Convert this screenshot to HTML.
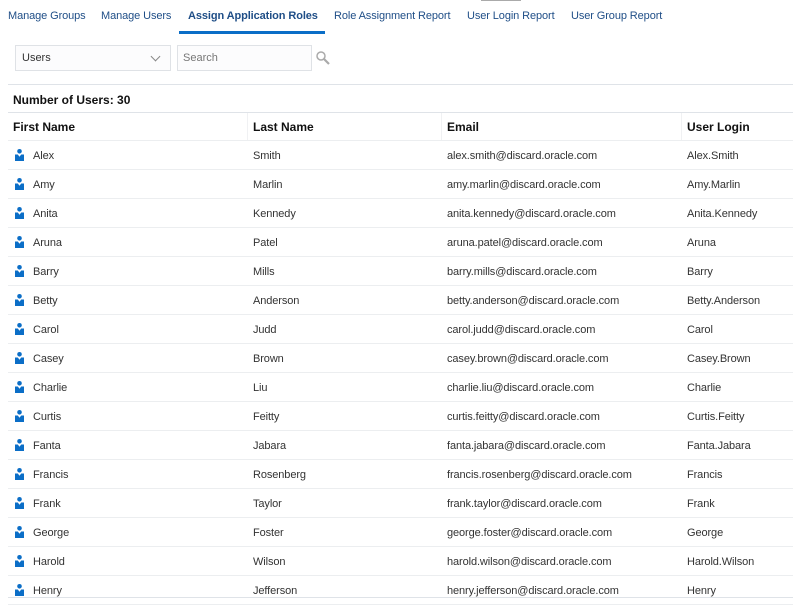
<!DOCTYPE html>
<html><head><style>
*{margin:0;padding:0;box-sizing:border-box}
body{width:793px;height:600px;overflow:hidden;background:#fff;font-family:"Liberation Sans",Arial,sans-serif;font-size:11px;color:#333;position:relative}
.tab{position:absolute;top:10px;color:#1f4e87;font-size:11px;white-space:nowrap;letter-spacing:-0.1px}
.ul{position:absolute;left:179px;top:31px;width:146px;height:3px;background:#0b6ec7}
.topbar{position:absolute;left:481px;top:0;width:40px;height:1px;background:#aaa}
.sel{position:absolute;left:15px;top:45px;width:156px;height:26px;border:1px solid #dfe2e6;background:#fcfcfd;padding:6px 0 0 6px;color:#333}
.sel:after{content:"";position:absolute;right:11px;top:7px;width:6px;height:6px;border-right:1px solid #888;border-bottom:1px solid #888;transform:rotate(45deg)}
.srch{position:absolute;left:177px;top:45px;width:135px;height:26px;border:1px solid #dfe2e6;background:#fcfcfd;padding:6px 0 0 5px;color:#777}
.hl{position:absolute;left:8px;right:0;height:1px;background:#dfe3e8}
.cnt{position:absolute;left:13px;top:93px;font-weight:bold;color:#111;font-size:12px}
.row{position:absolute;left:8px;right:0;height:29px;border-bottom:1px solid #eceef0}
.row span{position:absolute;top:9px;white-space:nowrap;letter-spacing:-0.1px}
.hd span{font-weight:bold;color:#111;font-size:12px;top:8px;letter-spacing:0}
.c1{left:25px}.c2{left:245px}.c3{left:439px}.c4{left:679px}
.hd .c1{left:5px}
.ic{position:absolute;left:7px;top:8px;width:9px;height:12px}
.sep{position:absolute;top:113px;height:27px;width:1px;background:#f0f1f3}
</style></head><body>
<div class="topbar"></div>
<div class="tab" style="left:8px">Manage Groups</div>
<div class="tab" style="left:101px">Manage Users</div>
<div class="tab" style="left:188px;font-weight:bold;color:#1f4e87">Assign Application Roles</div>
<div class="tab" style="left:334px">Role Assignment Report</div>
<div class="tab" style="left:467px">User Login Report</div>
<div class="tab" style="left:571px">User Group Report</div>
<div class="ul"></div>
<div class="sel">Users</div>
<div class="srch">Search</div>
<svg style="position:absolute;left:316px;top:51px" width="14" height="14" viewBox="0 0 14 14"><circle cx="5" cy="5" r="4" fill="none" stroke="#aaa" stroke-width="1.5"/><line x1="8" y1="8" x2="13" y2="13" stroke="#aaa" stroke-width="2.2"/></svg>
<div class="hl" style="top:84px"></div>
<div class="cnt">Number of Users: 30</div>
<div class="hl" style="top:112px"></div>
<div class="sep" style="left:247px"></div><div class="sep" style="left:441px"></div><div class="sep" style="left:681px"></div>
<div class="row hd" style="top:112px"><span class="c1">First Name</span><span class="c2">Last Name</span><span class="c3">Email</span><span class="c4">User Login</span></div>
<div id="rows"></div>
<div style="position:absolute;left:8px;right:0;top:597px;height:1px;background:#dfe3e8"></div>
<script>
var d=[["Alex","Smith","alex.smith","Alex.Smith"],["Amy","Marlin","amy.marlin","Amy.Marlin"],["Anita","Kennedy","anita.kennedy","Anita.Kennedy"],["Aruna","Patel","aruna.patel","Aruna"],["Barry","Mills","barry.mills","Barry"],["Betty","Anderson","betty.anderson","Betty.Anderson"],["Carol","Judd","carol.judd","Carol"],["Casey","Brown","casey.brown","Casey.Brown"],["Charlie","Liu","charlie.liu","Charlie"],["Curtis","Feitty","curtis.feitty","Curtis.Feitty"],["Fanta","Jabara","fanta.jabara","Fanta.Jabara"],["Francis","Rosenberg","francis.rosenberg","Francis"],["Frank","Taylor","frank.taylor","Frank"],["George","Foster","george.foster","George"],["Harold","Wilson","harold.wilson","Harold.Wilson"],["Henry","Jefferson","henry.jefferson","Henry"]];
var h="";d.forEach(function(r,i){h+='<div class="row" style="top:'+(141+i*29)+'px"><svg class="ic" viewBox="0 0 9 12"><circle cx="4.5" cy="2.3" r="2.3" fill="#0b6ec7"/><path d="M0 5.5h2.8l1.7 2.2 1.7-2.2H9V12H0z" fill="#0b6ec7"/></svg><span class="c1">'+r[0]+'</span><span class="c2">'+r[1]+'</span><span class="c3">'+r[2]+'@discard.oracle.com</span><span class="c4">'+r[3]+'</span></div>'});
document.getElementById("rows").innerHTML=h;
</script>
</body></html>
